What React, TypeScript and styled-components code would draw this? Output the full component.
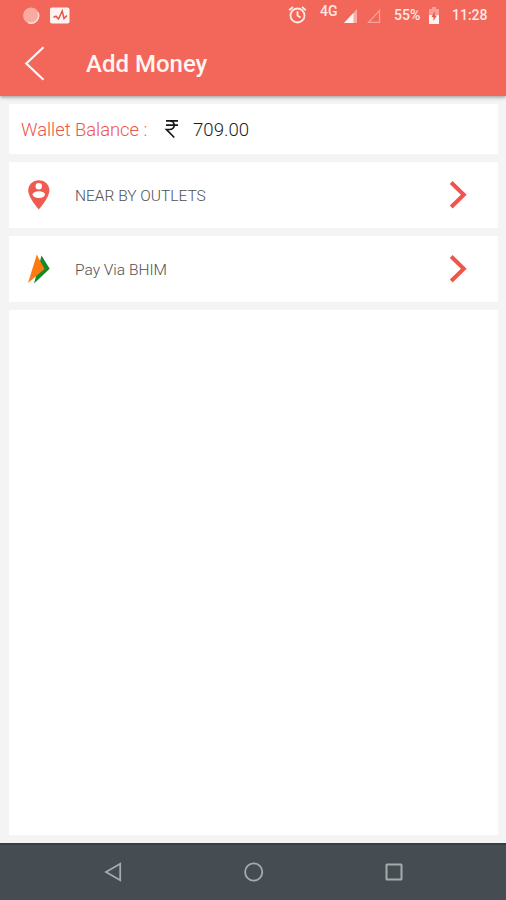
import React from "react";
import styled, { createGlobalStyle } from "styled-components";

const CORAL = "#f3665a";
const RED = "#ee564b";

const GlobalStyle = createGlobalStyle`
  * { box-sizing: border-box; }
  body { margin: 0; background: #f4f4f4; font-family: Roboto, "Liberation Sans", sans-serif; }
  svg { display: block; flex: none; }
`;

const Screen = styled.div`
  width: 506px;
  height: 900px;
  display: flex;
  flex-direction: column;
  background: #f4f4f4;
  overflow: hidden;
`;

const Header = styled.header`
  height: 96px;
  flex: none;
  background: ${CORAL};
  color: #fff5f2;
  box-shadow: 0 1px 4px rgba(0, 0, 0, 0.42);
  z-index: 1;
`;

const StatusBar = styled.div`
  height: 31px;
  display: flex;
  align-items: center;
  padding-left: 22px;
`;

const StatusText = styled.span<{ $width: number; $size?: number; $lift?: number; $gap?: number }>`
  width: ${(p) => p.$width}px;
  margin-left: ${(p) => p.$gap ?? 0}px;
  padding-bottom: ${(p) => p.$lift ?? 1}px;
  font-size: ${(p) => p.$size ?? 14}px;
  font-weight: 500;
  line-height: 16px;
  white-space: nowrap;
  color: #ffe9e4;
`;

const StatusIcon = styled.svg<{ $gap?: number }>`
  margin-left: ${(p) => p.$gap ?? 0}px;
`;

const TitleBar = styled.div`
  height: 65px;
  display: flex;
  align-items: center;
  padding-left: 22px;
`;

const Title = styled.h1`
  margin: 0 0 0 38px;
  font-size: 24px;
  line-height: 30px;
  font-weight: 500;
  white-space: nowrap;
`;

const Content = styled.main`
  flex: 1;
  display: flex;
  flex-direction: column;
  gap: 8px;
  padding: 8px 8px 8px 9px;
`;

const Card = styled.section<{ $height?: number }>`
  display: flex;
  align-items: center;
  background: #fff;
  ${(p) => (p.$height ? `height: ${p.$height}px; flex: none;` : "flex: 1;")}
`;

const BalanceLabel = styled.span`
  width: 155px;
  padding: 1px 0 0 12px;
  font-size: 18.4px;
  line-height: 22px;
  letter-spacing: -0.03px;
  font-weight: 300;
  color: ${RED};
  white-space: nowrap;
`;

const Amount = styled.span`
  margin-left: 14px;
  padding-top: 1px;
  font-size: 18.6px;
  line-height: 22px;
  font-weight: 300;
  color: #1c1c1c;
`;

const RowLabel = styled.span`
  flex: 1;
  margin-left: 20px;
  padding-top: 1px;
  font-size: 15.5px;
  font-weight: 300;
  color: #505050;
  white-space: nowrap;
`;

const RowIcon = styled.svg`
  margin-left: 14px;
`;

const RowChevron = styled.svg`
  margin-right: 28px;
`;

const NavBar = styled.nav`
  height: 57px;
  flex: none;
  display: flex;
  align-items: center;
  justify-content: space-between;
  padding: 0 102px 2px 103px;
  background: #464d52;
  border-top: 2px solid #343f42;
`;

const Chevron = () => (
  <RowChevron width="22" height="32" viewBox="0 0 22 32" fill="none" stroke={RED} strokeWidth="4">
    <path d="M3.2 3.5 L15.8 15.8 L3.2 28" />
  </RowChevron>
);

export default function App() {
  return (
    <Screen>
      <GlobalStyle />
      <Header>
        <StatusBar>
          <StatusIcon width="18" height="18" viewBox="0 0 18 18">
            <circle cx="9" cy="8.5" r="8" fill="#faaaa1" />
            <path d="M16 5.5A7.6 7.6 0 0 1 6 15.5" fill="none" stroke="#ffe0da" strokeWidth="1.4" />
          </StatusIcon>
          <StatusIcon $gap={10} width="20" height="18" viewBox="0 0 20 18">
            <rect x="0" y="0.5" width="19.5" height="16" rx="2" fill="#fff3f0" />
            <path d="M3.5 10.2 6 9.2 8.5 12 12.2 4 14 11.5 17 8.5" fill="none" stroke="#df5549" strokeWidth="1.5" />
          </StatusIcon>
          <StatusIcon $gap={218} width="19" height="19" viewBox="0 0 19 19" fill="none" stroke="#ffeae6" strokeWidth="1.8">
            <circle cx="9.5" cy="9.5" r="7" />
            <path d="M1.2 4.2 5 1M17.8 4.2 14 1M9.5 5.3V9.5l3 2" />
          </StatusIcon>
          <StatusText $width={20} $size={14} $lift={9} $gap={13}>4G</StatusText>
          <StatusIcon $gap={4} width="14" height="16" viewBox="0 0 14 16">
            <path d="M0 15 13 1V15Z" fill="#f9aaa2" />
            <path d="M0 15 9.5 5V15Z" fill="#fff3f0" />
          </StatusIcon>
          <StatusIcon $gap={9} width="14" height="16" viewBox="0 0 14 16" fill="none" stroke="#f9a299" strokeWidth="1.2">
            <path d="M1.5 14.3 12.5 2.5V14.3Z" />
          </StatusIcon>
          <StatusText $width={28} $gap={13}>55%</StatusText>
          <StatusIcon $gap={6} width="12" height="17" viewBox="0 0 12 17">
            <path d="M1 2H4V0H8V2H11V8H1Z" fill="#f99f95" />
            <path d="M1 8H11V17H1Z" fill="#fff3f0" />
            <path d="M6.8 4 3.5 10H5.5V14L8.8 8.5H6.8Z" fill="#e7584c" />
          </StatusIcon>
          <StatusText $width={40} $gap={12}>11:28</StatusText>
        </StatusBar>
        <TitleBar>
          <svg width="26" height="38" viewBox="0 0 26 38" fill="none" stroke="#fff5f2" strokeWidth="2.2">
            <path d="M21.5 2.3 4.3 18.5 21.5 34.7" />
          </svg>
          <Title>Add Money</Title>
        </TitleBar>
      </Header>
      <Content>
        <Card $height={50}>
          <BalanceLabel>Wallet Balance :</BalanceLabel>
          <svg width="15" height="20" viewBox="0 0 15 20" fill="none" stroke="#181818" strokeWidth="1.7">
            <path d="M2 1.9H14M2 6.2H14M2 1.9H5.5C11.8 1.9 11.8 10.5 5.5 10.5H2.5L10.3 18.5" />
          </svg>
          <Amount>709.00</Amount>
        </Card>
        <Card $height={66}>
          <RowIcon width="32" height="32" viewBox="0 0 32 32">
            <path d="M15.8 1.2C9.8 1.2 5.2 5.7 5.2 11.5 5.2 18.5 15.8 30.5 15.8 30.5S26.4 18.5 26.4 11.5C26.4 5.7 21.8 1.2 15.8 1.2Z" fill="#ef5b50" />
            <circle cx="15.8" cy="7.2" r="3.2" fill="#fff" />
            <ellipse cx="15.8" cy="15.6" rx="6.2" ry="3.3" fill="#fff" />
          </RowIcon>
          <RowLabel>NEAR BY OUTLETS</RowLabel>
          <Chevron />
        </Card>
        <Card $height={66}>
          <RowIcon width="32" height="32" viewBox="0 0 32 32">
            <path d="M18.5 2.5 26.7 15.8 11 30.5Z" fill="#148a2c" />
            <path d="M13.8 1.5 21.5 16 5 30Z" fill="#ff7b12" />
          </RowIcon>
          <RowLabel>Pay Via BHIM</RowLabel>
          <Chevron />
        </Card>
        <Card />
      </Content>
      <NavBar>
        <svg width="20" height="22" viewBox="0 0 20 22" fill="none" stroke="#a5abad" strokeWidth="1.8">
          <path d="M17.2 2.7V19.3L3 11Z" />
        </svg>
        <svg width="22" height="22" viewBox="0 0 22 22" fill="none" stroke="#a5abad" strokeWidth="1.8">
          <circle cx="10.7" cy="11" r="8.6" />
        </svg>
        <svg width="20" height="20" viewBox="0 0 20 20" fill="none" stroke="#a5abad" strokeWidth="2">
          <rect x="2.5" y="2.5" width="15" height="15" rx="0.5" />
        </svg>
      </NavBar>
    </Screen>
  );
}
